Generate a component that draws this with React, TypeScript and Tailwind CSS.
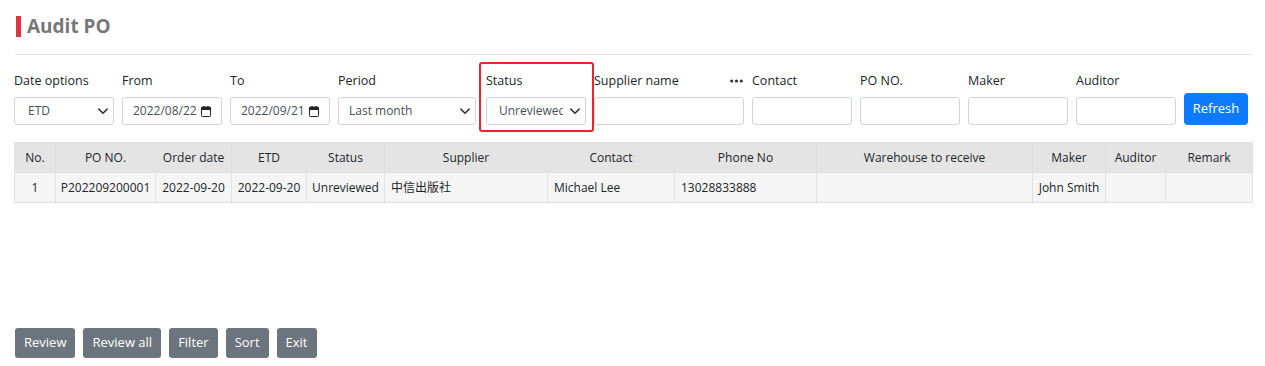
import React from "react";

const font = { fontFamily: '"Open Sans", "Noto Sans CJK SC", sans-serif' };

function Chevron() {
  return (
    <svg width="12" height="12" viewBox="0 0 16 16" className="shrink-0">
      <path d="M2.5 5.5l5.5 5.5 5.5-5.5" fill="none" stroke="#343a40" strokeWidth="2.2" strokeLinecap="round" strokeLinejoin="round" />
    </svg>
  );
}

function Cal() {
  return (
    <svg width="10" height="11" viewBox="0 0 10 11" className="shrink-0">
      <rect x="0.5" y="1" width="9" height="9.5" rx="1" fill="none" stroke="#222" strokeWidth="1" />
      <rect x="0.5" y="1" width="9" height="3" fill="#222" />
      <rect x="2.5" y="0" width="1" height="2" fill="#222" />
      <rect x="6.5" y="0" width="1" height="2" fill="#222" />
    </svg>
  );
}

function Dots() {
  return (
    <svg width="13" height="4" viewBox="0 0 13 4" className="mr-[1px]">
      <circle cx="1.7" cy="2" r="1.6" fill="#333" />
      <circle cx="6.5" cy="2" r="1.6" fill="#333" />
      <circle cx="11.3" cy="2" r="1.6" fill="#333" />
    </svg>
  );
}

function Field({
  label,
  w,
  children,
  extra,
  pr = "pr-[10px]",
}: {
  label: string;
  w: string;
  children?: React.ReactNode;
  extra?: React.ReactNode;
  pr?: string;
}) {
  return (
    <div className={`flex flex-col ${w}`}>
      <div className="h-[28px] flex items-center justify-between text-[12.5px] text-[#212529]">
        <span>{label}</span>
        {extra}
      </div>
      <div className={`h-[28px] mt-[2px] border border-[#ced4da] rounded-[3px] bg-white flex items-center pl-[10px] ${pr} text-[12px] text-[#495057]`}>
        {children}
      </div>
    </div>
  );
}

const cols: [string, number][] = [
  ["No.", 41],
  ["PO NO.", 100],
  ["Order date", 76],
  ["ETD", 75],
  ["Status", 78],
  ["Supplier", 163],
  ["Contact", 127],
  ["Phone No", 142],
  ["Warehouse to receive", 216],
  ["Maker", 73],
  ["Auditor", 60],
  ["Remark", 87],
];

const row: [string, string][] = [
  ["1", "center"],
  ["P202209200001", "center"],
  ["2022-09-20", "center"],
  ["2022-09-20", "center"],
  ["Unreviewed", "center"],
  ["中信出版社", "left"],
  ["Michael Lee", "left"],
  ["13028833888", "left"],
  ["", "left"],
  ["John Smith", "center"],
  ["", "center"],
  ["", "center"],
];

export default function App() {
  return (
    <div className="w-[1265px] h-[366px] bg-white relative overflow-hidden text-[#212529]" style={font}>
      <div className="px-[15px] pt-[14px]">
        <div className="flex items-center h-[24px] ml-[1px]">
          <div className="w-[5px] h-[21px] bg-[#dc3545]" />
          <span className="ml-[6px] text-[19px] font-bold text-[#777777] leading-none">Audit PO</span>
        </div>
        <div className="mt-[16px] h-px bg-[#e3e3e3] w-[1238px]" />
      </div>

      <div className="flex items-start gap-[8px] pl-[14px] mt-[12px]">
        <Field label="Date options" w="w-[100px]" pr="pr-[4px]">
          <span className="flex-1 pl-[3px]">ETD</span>
          <Chevron />
        </Field>
        <Field label="From" w="w-[100px]">
          <span className="flex-1 text-[12px] text-[#495057]">2022/08/22</span>
          <Cal />
        </Field>
        <Field label="To" w="w-[100px]">
          <span className="flex-1 text-[12px]">2022/09/21</span>
          <Cal />
        </Field>
        <Field label="Period" w="w-[138px]" pr="pr-[4px]">
          <span className="flex-1">Last month</span>
          <Chevron />
        </Field>
        <div className="ml-[2px]">
          <Field label="Status" w="w-[100px]" pr="pr-[4px]">
            <span className="ml-[2px] w-[64px] overflow-hidden whitespace-nowrap">Unreviewed</span>
            <span className="flex-1" />
            <Chevron />
          </Field>
        </div>
        <Field label="Supplier name" w="w-[150px]" extra={<Dots />} />
        <Field label="Contact" w="w-[100px]" />
        <Field label="PO NO." w="w-[100px]" />
        <Field label="Maker" w="w-[100px]" />
        <Field label="Auditor" w="w-[100px]" />
        <button className="mt-[26px] h-[32px] w-[64px] rounded-[4px] bg-[#0d7bff] text-white text-[13px]">Refresh</button>
      </div>

      <div className="absolute left-[479px] top-[62px] w-[115px] h-[70px] border-2 border-[#e8262b] rounded-[3px] pointer-events-none" />

      <div className="ml-[14px] mt-[17px]">
        <table className="table-fixed w-[1239px] border-collapse text-[12px] text-[#212529]">
          <thead>
            <tr className="bg-[#e4e4e4] h-[30px]">
              {cols.map(([c, w]) => (
                <th key={c} style={{ width: w }} className="font-normal border border-[#dee2e6] px-[4px] text-center whitespace-nowrap">
                  {c}
                </th>
              ))}
            </tr>
          </thead>
          <tbody>
            <tr className="bg-[#f5f5f5] h-[30px]">
              {row.map(([v, a], i) => (
                <td
                  key={i}
                  className={`border border-[#dee2e6] px-[4px] whitespace-nowrap ${a === "left" ? "text-left pl-[6px]" : "text-center"}`}
                >
                  {v}
                </td>
              ))}
            </tr>
          </tbody>
        </table>
      </div>

      <div className="absolute left-[15px] top-[328px] flex gap-[8px]">
        {["Review", "Review all", "Filter", "Sort", "Exit"].map((b) => (
          <button key={b} className="h-[30px] px-[9px] rounded-[3px] bg-[#6c757d] text-white text-[13px]">
            {b}
          </button>
        ))}
      </div>
    </div>
  );
}
